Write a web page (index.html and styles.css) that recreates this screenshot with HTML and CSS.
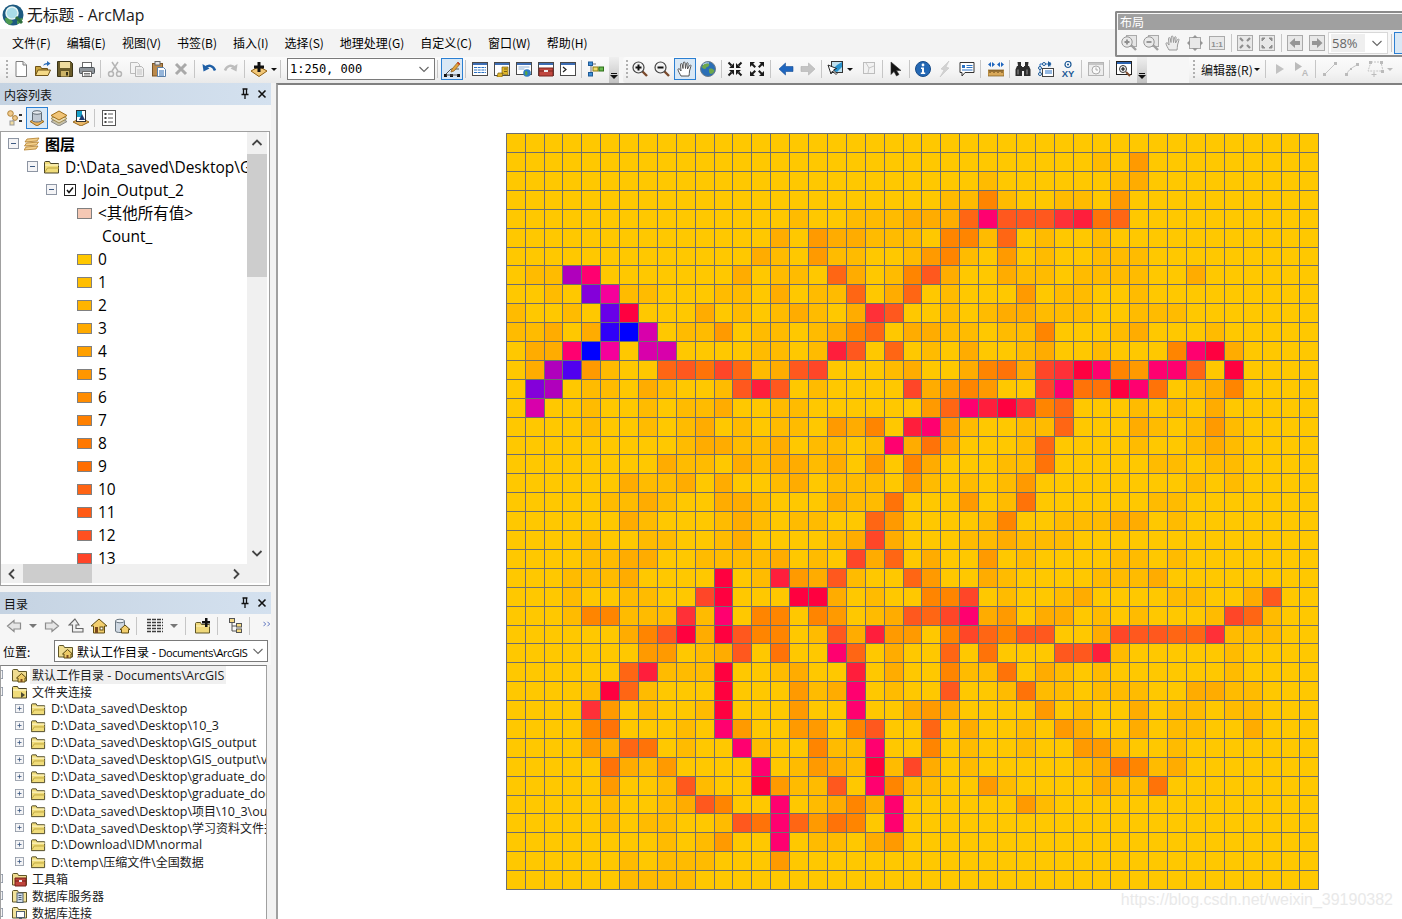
FILE: index.html
```html
<!DOCTYPE html>
<html lang="zh-CN">
<head>
<meta charset="utf-8">
<title>无标题 - ArcMap</title>
<link rel="stylesheet" href="styles.css">
</head>
<body>
<svg class="sprite" xmlns="http://www.w3.org/2000/svg">
<symbol id="new" viewBox="0 0 16 16"><path d="M3 .5h7l3.500 3.500v11.500H3z" fill="#fff" stroke="#7d7d7d"/><path d="M10 .5V4h3.500" fill="#e6e6e6" stroke="#7d7d7d"/></symbol>
<symbol id="open" viewBox="0 0 16 16"><path d="M.5 14.500V5.500h5l1 2h6v7z" fill="#c9a43f" stroke="#6e5318"/><path d="M.5 14.500l2.500-5.500h12.500l-2.500 5.500z" fill="#f4d987" stroke="#6e5318"/><path d="M8 5c.5-2 2-3 4-3V0l3.500 2.500L12 5.200V3.500C10.500 3.500 9 4 8 5z" fill="#2a6cb8"/></symbol>
<symbol id="save" viewBox="0 0 16 16"><path d="M.5 .5h13l2 2v13H.5z" fill="#6a5c2a" stroke="#3a3418"/><rect x="3" y="1" width="10" height="6" fill="#efdda0"/><rect x="4" y="10" width="8" height="5.500" fill="#cdb468"/><rect x="9" y="11" width="2" height="3.500" fill="#3a3418"/></symbol>
<symbol id="print" viewBox="0 0 16 16"><rect x="3.500" y="1.500" width="9" height="5" fill="#fff" stroke="#6a6a6a"/><rect x=".5" y="6.500" width="15" height="6" rx="1" fill="#8f959b" stroke="#4d5358"/><rect x="3.500" y="10.500" width="9" height="5" fill="#fff" stroke="#6a6a6a"/><path d="M5 12.500h6M5 14h6" stroke="#777"/></symbol>
<symbol id="cut" viewBox="0 0 16 16"><path d="M5 1l6 9M11 1l-6 9" stroke="#b5b5b5" stroke-width="1.500"/><circle cx="4" cy="13" r="2.500" fill="none" stroke="#b5b5b5" stroke-width="1.500"/><circle cx="12" cy="13" r="2.500" fill="none" stroke="#b5b5b5" stroke-width="1.500"/></symbol>
<symbol id="copy" viewBox="0 0 16 16"><path d="M1.500 1.500h7l2 2v9h-9z" fill="#f4f4f4" stroke="#bbb"/><path d="M6.500 5.500h6l2 2v8h-8z" fill="#f0f0f0" stroke="#b5b5b5"/><path d="M8 9h5M8 11h5M8 13h5" stroke="#c4c4c4"/></symbol>
<symbol id="paste" viewBox="0 0 16 16"><rect x="1.500" y="2.500" width="10" height="12.500" fill="#bb8a4c" stroke="#7a5527"/><rect x="4" y=".5" width="5" height="3.500" fill="#e8e8e8" stroke="#666"/><path d="M6.500 6.500h6l2 2v7h-8z" fill="#fff" stroke="#5a7fa8"/><path d="M8 10h5M8 12h5M8 14h5" stroke="#2c6db5"/></symbol>
<symbol id="del" viewBox="0 0 16 16"><path d="M3 3l10 10M13 3L3 13" stroke="#a9a9a9" stroke-width="3"/></symbol>
<symbol id="undo" viewBox="0 0 16 16"><path d="M4 7c3-3.500 8-3 10 2.500" fill="none" stroke="#1f5fa6" stroke-width="2.500"/><path d="M1.500 3l1 7.500 6-3z" fill="#1f5fa6"/></symbol>
<symbol id="redo" viewBox="0 0 16 16"><path d="M12 7C9 3.500 4 4 2 9.500" fill="none" stroke="#bdbdbd" stroke-width="2.500"/><path d="M14.500 3l-1 7.500-6-3z" fill="#bdbdbd"/></symbol>
<symbol id="add" viewBox="0 0 16 16"><path d="M8 5.500L16 10l-8 5.500L0 10z" fill="#f2c777" stroke="#8f5f12"/><path d="M6.500 1h3v3.500H13v3H9.500V11h-3V7.500H3v-3h3.500z" fill="#111"/></symbol>
<symbol id="edit" viewBox="0 0 18 18"><path d="M2 15l6-6h8" fill="none" stroke="#555" /><rect x="1" y="14" width="3" height="3" fill="#111"/><rect x="7" y="14" width="3" height="3" fill="#111"/><rect x="14" y="14" width="3" height="3" fill="#111"/><path d="M3 15h12" stroke="#555"/><path d="M9 9l6-7 2 2-6 7-3 1z" fill="#e2a33c" stroke="#8a5a14" stroke-width=".7"/><path d="M14.500 2.500l2 2" stroke="#d03a2a" stroke-width="1.500"/></symbol>
<symbol id="wtable" viewBox="0 0 16 16"><rect x=".5" y="1.500" width="15" height="13" fill="#fff" stroke="#4a4a4a"/><rect x="1" y="2" width="14" height="2" fill="#3d6db3"/><path d="M2 6.500h12M2 9h12M2 11.500h12" stroke="#2a72c4" stroke-dasharray="3 .7"/></symbol>
<symbol id="wcat" viewBox="0 0 16 16"><rect x=".5" y="1.500" width="15" height="13" fill="#fff" stroke="#4a4a4a"/><rect x="1" y="2" width="14" height="2" fill="#3d6db3"/><path d="M3 16l1-4h5l-1 4zM8 13V6h6v8z" fill="#e0b62a" stroke="#7c6210" stroke-width=".7"/><path d="M10 8h3M10 10.500h3" stroke="#7c6210"/></symbol>
<symbol id="wsearch" viewBox="0 0 16 16"><rect x=".5" y="1.500" width="15" height="12" fill="#fff" stroke="#4a4a4a"/><rect x="1" y="2" width="14" height="2" fill="#3d6db3"/><path d="M2.500 6h11M2.500 8h6" stroke="#8db0d6"/><circle cx="11" cy="12" r="3.800" fill="#2e7cc4"/><path d="M9 10.500c1.500-.5 2.500 0 2.500 1.500s-1 3-2 2.500z" fill="#5aa83e"/></symbol>
<symbol id="wtool" viewBox="0 0 16 16"><rect x=".5" y="1.500" width="15" height="13" fill="#fff" stroke="#4a4a4a"/><rect x="1" y="2" width="14" height="2" fill="#3d6db3"/><path d="M1 7h14v8H1z" fill="#c0473f" stroke="#7a2620"/><path d="M1 10h14" stroke="#7a2620"/><rect x="6" y="9" width="4" height="2" fill="#eee"/></symbol>
<symbol id="wpy" viewBox="0 0 16 16"><rect x=".5" y="1.500" width="15" height="13" fill="#fff" stroke="#4a4a4a"/><rect x="1" y="2" width="14" height="2" fill="#3d6db3"/><path d="M3 6l3 2.500L3 11" fill="none" stroke="#222" stroke-width="1.200"/></symbol>
<symbol id="model" viewBox="0 0 16 16"><path d="M3 3v10M3 3h5M3 13h2M6 8h5" stroke="#777" fill="none"/><rect x=".5" y="1" width="4" height="3.500" fill="#3f8fd8" stroke="#1e5a96"/><rect x=".5" y="11.500" width="4" height="3.500" fill="#3f8fd8" stroke="#1e5a96"/><rect x="5" y="6" width="5" height="4" fill="#f0dd6c" stroke="#8f7c14"/><rect x="11" y="6" width="4.500" height="4" fill="#69b850" stroke="#2f7018"/></symbol>
<symbol id="zin" viewBox="0 0 16 16"><path d="M10 10l5 5" stroke="#7b4a2c" stroke-width="2.400"/><circle cx="6.500" cy="6.500" r="5.500" fill="#f2f2f2" stroke="#444" stroke-width="1.200"/><path d="M3.500 6.500h6M6.500 3.500v6" stroke="#111" stroke-width="2"/></symbol>
<symbol id="zout" viewBox="0 0 16 16"><path d="M10 10l5 5" stroke="#7b4a2c" stroke-width="2.400"/><circle cx="6.500" cy="6.500" r="5.500" fill="#f2f2f2" stroke="#444" stroke-width="1.200"/><path d="M3.500 6.500h6" stroke="#111" stroke-width="2"/></symbol>
<symbol id="hand" viewBox="0 0 16 16"><path d="M4 15C3 13 1 10 1 8.500c0-1 1.300-1 2 0L4 10 3.500 3.500c0-1.200 1.500-1.200 1.700 0l.8 4L6.300 2c0-1.300 1.700-1.300 1.800 0l.4 5.500L9.500 2.500c.2-1.200 1.800-1 1.600.3L10.500 8l2-3.500c.6-1 1.900-.4 1.400.7L12.500 10c-.3 2 0 3-.5 5z" fill="#fff" stroke="#444" stroke-width=".9"/></symbol>
<symbol id="globe" viewBox="0 0 16 16"><circle cx="8" cy="8" r="7.500" fill="#2b6fb6" stroke="#6d7d8a"/><path d="M4 3c2-1 4-1 5 0s-1 3-2 3-1 2-2 2-3-1-3-2 1-2 2-3zM9 8c2-1 4 0 5 1s-1 4-3 4-2-3-2-5z" fill="#6fa84a"/><path d="M3 3.500C5 2 7 1.500 9 2" stroke="#cfe3f2" fill="none"/></symbol>
<symbol id="fzin" viewBox="0 0 16 16"><path d="M1.500 1.500l3 3M14.500 1.500l-3 3M1.500 14.500l3-3M14.500 14.500l-3-3" stroke="#1a1a1a" stroke-width="2"/><path d="M2 7h5V2zM14 7H9V2zM2 9h5v5zM14 9H9v5z" fill="#1a1a1a"/></symbol>
<symbol id="fzout" viewBox="0 0 16 16"><path d="M1 1h5L4.200 2.800 7 5.500 5.500 7 2.800 4.200 1 6zM15 1h-5l1.800 1.800L9 5.500 10.500 7l2.700-2.800L15 6zM1 15h5l-1.800-1.800L7 10.500 5.500 9l-2.700 2.800L1 10zM15 15h-5l1.800-1.800L9 10.500 10.500 9l2.700 2.800L15 10z" fill="#1a1a1a"/></symbol>
<symbol id="back" viewBox="0 0 16 16"><path d="M7.500 2L1 8l6.500 6v-3.500H15v-5H7.500z" fill="#1f66bf" stroke="#174f95" stroke-width=".6"/></symbol>
<symbol id="fwd" viewBox="0 0 16 16"><path d="M8.500 2L15 8l-6.500 6v-3.500H1v-5h7.500z" fill="#c4c4c4" stroke="#b0b0b0" stroke-width=".6"/></symbol>
<symbol id="sel" viewBox="0 0 16 16"><rect x="4.500" y=".5" width="11" height="11" fill="#bfe0ee" stroke="#333"/><path d="M5 9l5-5 5-3v5l-5 5z" fill="#2a92cc"/><path d="M1 4l3 9 1.500-3 3.500 3.500 1-1L6.500 9l3-1.500z" fill="#fff" stroke="#111" stroke-width=".9"/></symbol>
<symbol id="clear" viewBox="0 0 16 16"><rect x="2.500" y="1.500" width="11" height="11" fill="#f2f2f2" stroke="#bdbdbd"/><path d="M5 2l3 5-1 5M8 7l5-2" stroke="#c6c6c6" fill="none"/></symbol>
<symbol id="arrow" viewBox="0 0 16 16"><path d="M3 1v12.500l3-3 2.500 4.500 2.500-1.500L8.500 9.500 13 9.500z" fill="#151515" stroke="#333" stroke-width=".6"/></symbol>
<symbol id="info" viewBox="0 0 16 16"><circle cx="8" cy="8" r="7.500" fill="#2468b4" stroke="#174b88"/><circle cx="8" cy="4" r="1.400" fill="#fff"/><path d="M6 6.500h3v5h1.200V13H5.800v-1.500H7V8H6z" fill="#fff"/></symbol>
<symbol id="bolt" viewBox="0 0 16 16"><path d="M12 0L4 8l3 1-4 7 9-9-3-1z" fill="#d2d2d2" stroke="#c0c0c0" stroke-width=".5"/></symbol>
<symbol id="popup" viewBox="0 0 16 16"><path d="M1 1.500h14v10H6l-3 3.500v-3.500H1z" fill="#fff" stroke="#333"/><rect x="3" y="4" width="3" height="3" fill="#2a72c4"/><path d="M7.500 4.500h6M7.500 6.500h6M3 9h10.500" stroke="#2a72c4"/></symbol>
<symbol id="measure" viewBox="0 0 16 16"><path d="M0 3.500L3 1v5zM7 3.500L4 1v5zM16 3.500L13 1v5zM9 3.500L12 1v5z" fill="#1f66bf"/><rect y="9" width="16" height="6" fill="#d9a95a" stroke="#7d5a1e" stroke-width=".7"/><path d="M2 9v3M4 9v2M6 9v3M8 9v2M10 9v3M12 9v2M14 9v3" stroke="#5c3f12"/></symbol>
<symbol id="find" viewBox="0 0 16 16"><path d="M2.500 1h3.500v4H3zM10 1h3.500l-.5 4h-3zM2 5h5v10H.5V8.500zM9 5h5l1.500 3.500V15H9zM7 6h2v4H7z" fill="#2d2d2d"/><path d="M3 8.500v5M12 8.500v5" stroke="#9a9a9a"/></symbol>
<symbol id="route" viewBox="0 0 16 16"><rect x="4.500" y="7.500" width="11" height="8" fill="#fff" stroke="#444"/><path d="M7 10h7M7 12h7" stroke="#2a72c4"/><path d="M2 12V3h8M12 5.500V1" stroke="#2a72c4" fill="none"/><circle cx="2" cy="7" r="1.500" fill="#fff" stroke="#1e5a96"/><circle cx="2" cy="13" r="1.500" fill="#fff" stroke="#1e5a96"/><circle cx="6" cy="3" r="1.500" fill="#fff" stroke="#1e5a96"/><path d="M10 0v6l3.500-3z" fill="#1e5a96"/></symbol>
<symbol id="xy" viewBox="0 0 16 16"><circle cx="8" cy="3.500" r="3" fill="#fff" stroke="#1e5a96" stroke-width="1.200"/><circle cx="8" cy="3.500" r="1.100" fill="#1e5a96"/><text x="8" y="15.500" text-anchor="middle" class="svgxy">XY</text></symbol>
<symbol id="time" viewBox="0 0 16 16"><rect x=".5" y="1.500" width="15" height="13" fill="#ededed" stroke="#b5b5b5"/><rect x="1" y="2" width="14" height="2" fill="#c6c6c6"/><circle cx="8" cy="9" r="4" fill="#fafafa" stroke="#aaa"/><path d="M8 6.500V9h2" stroke="#aaa" fill="none"/></symbol>
<symbol id="viewer" viewBox="0 0 16 16"><rect x=".5" y=".5" width="15" height="13" fill="#fff" stroke="#222"/><rect x="1" y="1" width="14" height="2" fill="#2c63b0"/><path d="M10 11l4 4" stroke="#7b4a2c" stroke-width="2"/><circle cx="7" cy="8" r="3.500" fill="#f2f2f2" stroke="#333"/><path d="M5 8h4M7 6v4" stroke="#111" stroke-width="1.200"/></symbol>
<symbol id="e1" viewBox="0 0 16 16"><path d="M4 3v10l8-5z" fill="#c2c2c2"/></symbol>
<symbol id="e2" viewBox="0 0 16 16"><path d="M1 1v9l7-4.500z" fill="#bbb"/><text x="11" y="15" text-anchor="middle" class="svga">A</text></symbol>
<symbol id="e3" viewBox="0 0 16 16"><path d="M3 13L13 3" stroke="#c4c4c4"/><rect x="1" y="12" width="3" height="3" fill="#bbb"/><rect x="12" y="1" width="3" height="3" fill="#bbb"/></symbol>
<symbol id="e4" viewBox="0 0 16 16"><path d="M3 13C4 9 9 6 13 4" stroke="#c4c4c4" fill="none"/><rect x="1" y="12" width="3" height="3" fill="#bbb"/><rect x="12" y="2" width="3" height="3" fill="#bbb"/><rect x="6" y="7" width="2" height="2" fill="#bbb"/></symbol>
<symbol id="e5" viewBox="0 0 18 18"><path d="M5 2h10l2 9-8 0-7 0z" fill="none" stroke="#c4c4c4" stroke-dasharray="2 1"/><rect x="3" y="1" width="3" height="3" fill="#bbb"/><rect x="14" y="1" width="3" height="3" fill="#bbb"/><rect x="15" y="10" width="3" height="3" fill="#bbb"/><path d="M8 12v5M5.500 14.500h5" stroke="#bbb"/></symbol>
<symbol id="tdo" viewBox="0 0 16 16"><path d="M3 4l5 4-4 5M8 8h3" stroke="#888" fill="none"/><circle cx="3.500" cy="3.500" r="2.800" fill="#f0c98a" stroke="#b0843c"/><circle cx="8" cy="8" r="2.400" fill="#f0c98a" stroke="#b0843c"/><rect x="3" y="11" width="4" height="4" fill="#f0dca0" stroke="#999"/><rect x="12" y="4" width="3" height="2" fill="#333"/><rect x="12" y="10" width="3" height="2" fill="#333"/></symbol>
<symbol id="tsrc" viewBox="0 0 16 16"><path d="M8 8l7 3.500L8 16l-7-4.500z" fill="#e8b25c" stroke="#96681c"/><path d="M3.500 2.500v8c0 2 9 2 9 0v-8z" fill="#bfc8d2" stroke="#5e6a74"/><ellipse cx="8" cy="2.500" rx="4.500" ry="1.800" fill="#e6eaef" stroke="#5e6a74"/></symbol>
<symbol id="tvis" viewBox="0 0 16 16"><path d="M8 7l8 4.500L8 16l-8-4.500z" fill="#c6c0a8" stroke="#888"/><path d="M8 4l8 4.500L8 13 0 8.500z" fill="#e7dcb8" stroke="#a08a50"/><path d="M8 1l8 4.500L8 10 0 5.500z" fill="#f0c477" stroke="#a06e18"/></symbol>
<symbol id="tsel" viewBox="0 0 16 16"><path d="M8 8l8 4L8 16l-8-4z" fill="#eab869" stroke="#96681c"/><rect x="3.500" y=".5" width="9" height="11" fill="#fff" stroke="#333"/><path d="M4 1h5v6H4z" fill="#18a0c8"/><path d="M9 4l3 6H6z" fill="#1d3b70"/></symbol>
<symbol id="topt" viewBox="0 0 16 16"><rect x="1.500" y=".5" width="13" height="15" fill="#fff" stroke="#555"/><path d="M7 4h5M7 8h5M7 12h5" stroke="#555"/><rect x="3.500" y="3" width="2" height="2" fill="#444"/><rect x="3.500" y="7" width="2" height="2" fill="#444"/><rect x="3.500" y="11" width="2" height="2" fill="#444"/></symbol>
<symbol id="minus" viewBox="0 0 11 11"><rect x=".5" y=".5" width="10" height="10" fill="#f4f4f6" stroke="#8d95a3"/><path d="M3 5.500h5" stroke="#3d5a82"/></symbol>
<symbol id="plus" viewBox="0 0 11 11"><rect x=".5" y=".5" width="10" height="10" fill="#f4f4f6" stroke="#8d95a3"/><path d="M3 5.500h5M5.500 3v5" stroke="#3d5a82"/></symbol>
<symbol id="lyr" viewBox="0 0 16 16"><path d="M3 3l12-1-2 3-12 1zM2.500 7l12-1-2 3-12 1zM2 11l12-1-2 3-12 1z" fill="#f3cf8a" stroke="#b07c2a" stroke-width=".8"/></symbol>
<symbol id="folder" viewBox="0 0 16 16"><path d="M.5 14V3.500c0-.5.500-1 1-1h4l1 2h8v9.500z" fill="#f0dc7a" stroke="#4a4428"/><path d="M1 6h14" stroke="#fff9d4"/><path d="M1 13l2.500-4H15" stroke="#bda53e" fill="none"/></symbol>
<symbol id="fconn" viewBox="0 0 16 16"><path d="M.5 14V3.500c0-.5.500-1 1-1h4l1 2h8v9.500z" fill="#f0dc7a" stroke="#4a4428"/><path d="M1 6h14" stroke="#fff9d4"/><path d="M9 8l4 3-4 3z" fill="#4d4a30"/></symbol>
<symbol id="fhome" viewBox="0 0 16 16"><path d="M.5 14V3.500c0-.5.500-1 1-1h4l1 2h8v9.500z" fill="#efdc90" stroke="#5f5628"/><path d="M9.500 6.500l-5 4.500h1.500v4h7v-4h1.500z" fill="#eecb66" stroke="#5c4a12"/><rect x="8.500" y="12" width="2" height="3" fill="#7a4a1c"/></symbol>
<symbol id="fdb" viewBox="0 0 16 16"><path d="M.5 14V3.500c0-.5.500-1 1-1h4l1 2h8v9.500z" fill="#f2e39c" stroke="#5f5628"/><rect x="5" y="5" width="6" height="9.500" fill="#cfdbe8" stroke="#50606e"/><path d="M6.500 7.500h3M6.500 9.500h3M6.500 11.500h3" stroke="#50606e"/></symbol>
<symbol id="fdbc" viewBox="0 0 16 16"><path d="M.5 13V3.500c0-.5.500-1 1-1h4l1 2h8V13z" fill="#f2e39c" stroke="#5f5628"/><rect x="4.500" y="6.500" width="8" height="6" fill="#fff" stroke="#50606e"/><rect x="7" y="13" width="3" height="2.500" fill="#50606e"/></symbol>
<symbol id="ftool" viewBox="0 0 16 16"><path d="M.5 14V3.500c0-.5.500-1 1-1h4l1 2h8v9.500z" fill="#efdc90" stroke="#5f5628"/><path d="M3 7h11v8H3z" fill="#c0443c" stroke="#742118"/><path d="M3 10h11" stroke="#742118"/><rect x="7" y="9" width="3" height="2" fill="#eee"/></symbol>
<symbol id="cback" viewBox="0 0 16 16"><path d="M8 2.500L1.500 8 8 13.500V11h6.500V5H8z" fill="#e6e6e6" stroke="#8c8c8c" stroke-width="1.200"/></symbol>
<symbol id="cfwd" viewBox="0 0 16 16"><path d="M8 2.500L14.500 8 8 13.500V11H1.500V5H8z" fill="#e6e6e6" stroke="#8c8c8c" stroke-width="1.200"/></symbol>
<symbol id="cup" viewBox="0 0 16 16"><path d="M7 1L1 7h3.500v7H15v-3.500H8V7h3z" fill="#f0f0f0" stroke="#666" stroke-width="1.100"/></symbol>
<symbol id="chome" viewBox="0 0 16 16"><path d="M8 1L0 8h2.500v7h11V8H16z" fill="#f3cf6e" stroke="#5e4a12"/><rect x="4" y="9" width="3" height="6" fill="#7a4a1c"/><rect x="9" y="9" width="3" height="3" fill="#fff" stroke="#5e4a12"/></symbol>
<symbol id="cdb" viewBox="0 0 16 16"><path d="M1.500 3v10c0 2 9 2 9 0V3z" fill="#cfd8e2" stroke="#6a7680"/><ellipse cx="6" cy="3" rx="4.500" ry="1.800" fill="#eef2f6" stroke="#6a7680"/><path d="M11 7l-5 4.500h1.500V15h7v-3.500H16z" fill="#f3cf6e" stroke="#5e4a12"/></symbol>
<symbol id="cgrid" viewBox="0 0 18 16"><path d="M1 1.500h16M1 4.500h16M1 7.500h16M1 10.500h16M1 13.500h16" stroke="#3e3e3e" stroke-width="1.500" stroke-dasharray="4 1"/></symbol>
<symbol id="cnew" viewBox="0 0 16 16"><path d="M.5 15V5.500c0-.5.500-1 1-1h4l1 2h8V15z" fill="#efd87a" stroke="#5f5628"/><path d="M1 8h14" stroke="#fff6c2"/><path d="M10 0h2.500v3H15v2.500h-2.500V9H10V5.500H7V3h3z" fill="#111"/></symbol>
<symbol id="ctree" viewBox="0 0 16 16"><rect x="1.500" y=".5" width="5" height="4" fill="#f3d985" stroke="#555"/><path d="M4 5v8h4M4 8h4" stroke="#555" fill="none"/><rect x="8.500" y="5.500" width="5" height="3.500" fill="#f3d985" stroke="#555"/><rect x="8.500" y="11" width="5" height="3.500" fill="#f3d985" stroke="#555"/></symbol>
<symbol id="more" viewBox="0 0 9 6"><path d="M.5 .5L3 3 .5 5.500M5 .5L7.500 3 5 5.500" fill="none" stroke="#4a63b8"/></symbol>
<symbol id="g1" viewBox="0 0 16 16"><rect x="5.500" y=".5" width="10" height="11" fill="#e6e6e6" stroke="#aaa"/><path d="M10 10l5 5" stroke="#a0a0a0" stroke-width="2.400"/><circle cx="6" cy="7" r="5.200" fill="#eaeaea" stroke="#969696"/><path d="M3.500 7h5M6 4.500v5" stroke="#8e8e8e" stroke-width="1.800"/></symbol>
<symbol id="g2" viewBox="0 0 16 16"><rect x="5.500" y=".5" width="10" height="11" fill="#e6e6e6" stroke="#aaa"/><path d="M10 10l5 5" stroke="#a0a0a0" stroke-width="2.400"/><circle cx="6" cy="7" r="5.200" fill="#eaeaea" stroke="#969696"/><path d="M3.500 7h5" stroke="#8e8e8e" stroke-width="1.800"/></symbol>
<symbol id="g3" viewBox="0 0 16 16"><path d="M4 15C3 13 1 10 1 8.500c0-1 1.300-1 2 0L4 10 3.500 3.500c0-1.200 1.500-1.200 1.700 0l.8 4L6.300 2c0-1.300 1.700-1.300 1.800 0l.4 5.500L9.500 2.500c.2-1.200 1.800-1 1.600.3L10.500 8l2-3.500c.6-1 1.900-.4 1.400.7L12.500 10c-.3 2 0 3-.5 5z" fill="#ececec" stroke="#999" stroke-width="1"/></symbol>
<symbol id="g4" viewBox="0 0 16 16"><rect x="2.500" y="2.500" width="11" height="11" fill="#e8e8e8" stroke="#aaa"/><path d="M8 0l3 3H5zM8 16l3-3H5zM0 8l3-3v6zM16 8l-3-3v6z" fill="#969696"/></symbol>
<symbol id="g5" viewBox="0 0 16 16"><rect x=".5" y="1.500" width="15" height="13" fill="#e8e8e8" stroke="#aaa"/><text x="8" y="12" text-anchor="middle" class="svg11">1:1</text></symbol>
<symbol id="g6" viewBox="0 0 16 16"><rect x=".5" y=".5" width="15" height="15" fill="#e8e8e8" stroke="#aaa"/><path d="M3 3l3 3M13 3l-3 3M3 13l3-3M13 13l-3-3" stroke="#8e8e8e" stroke-width="2.200"/></symbol>
<symbol id="g7" viewBox="0 0 16 16"><rect x=".5" y=".5" width="15" height="15" fill="#e8e8e8" stroke="#aaa"/><path d="M3 3h3L3 6zM13 3h-3l3 3zM3 13h3l-3-3zM13 13h-3l3-3z" fill="#8e8e8e" stroke="#8e8e8e"/></symbol>
<symbol id="g8" viewBox="0 0 16 16"><rect x=".5" y=".5" width="15" height="15" fill="#e8e8e8" stroke="#aaa"/><path d="M8 3L2.500 8 8 13v-3h5V6H8z" fill="#969696"/></symbol>
<symbol id="g9" viewBox="0 0 16 16"><rect x=".5" y=".5" width="15" height="15" fill="#e8e8e8" stroke="#aaa"/><path d="M8 3l5.500 5L8 13v-3H3V6h5z" fill="#969696"/></symbol>
<symbol id="chevd" viewBox="0 0 12 12"><path d="M1.500 4L6 8.500 10.500 4" fill="none" stroke="#666" stroke-width="1.100"/></symbol>
<symbol id="chevd2" viewBox="0 0 12 12"><path d="M1.500 4L6 8.500 10.500 4" fill="none" stroke="#444" stroke-width="1.800"/></symbol>
<symbol id="chevu2" viewBox="0 0 12 12"><path d="M1.500 8L6 3.500 10.500 8" fill="none" stroke="#444" stroke-width="1.800"/></symbol>
<symbol id="chevl2" viewBox="0 0 12 12"><path d="M8 1.500L3.500 6 8 10.500" fill="none" stroke="#444" stroke-width="1.800"/></symbol>
<symbol id="chevr2" viewBox="0 0 12 12"><path d="M4 1.500L8.500 6 4 10.500" fill="none" stroke="#444" stroke-width="1.800"/></symbol>
<symbol id="pin" viewBox="0 0 10 12"><path d="M2.500 1h5M3.500 1v5M6.500 1v5M1.500 6.500h7M5 6.500V11" stroke="#111" fill="none" stroke-width="1.300"/></symbol>
<symbol id="close" viewBox="0 0 10 10"><path d="M1.500 1.500l7 7M8.500 1.500l-7 7" stroke="#111" stroke-width="1.600"/></symbol>
<symbol id="check" viewBox="0 0 12 12"><rect x=".5" y=".5" width="11" height="11" fill="#fff" stroke="#222"/><path d="M3 6l2 2.500L9 3.500" fill="none" stroke="#111" stroke-width="1.500"/></symbol>
</svg>

<div class="app">
  <header class="titlebar">
    <svg class="logo" viewBox="0 0 22 22"><circle cx="11" cy="11" r="10.500" fill="#1d5a80"/><path d="M3 14c3-1 6 1 8 4l-3 3c-3-1-5-3-5-7zM15 17c2-2 4-3 6-3-1 3-3 6-6 6z" fill="#4f9a52"/><circle cx="10" cy="9" r="6" fill="#a9dce8" stroke="#e8f6f4" stroke-width="1.500"/><path d="M14 13l6 6" stroke="#2f6e3e" stroke-width="3"/></svg>
    <span class="apptitle">无标题 - ArcMap</span>
  </header>
  <nav class="menubar">
    <span>文件(F)</span><span>编辑(E)</span><span>视图(V)</span><span>书签(B)</span><span>插入(I)</span><span>选择(S)</span><span>地理处理(G)</span><span>自定义(C)</span><span>窗口(W)</span><span>帮助(H)</span>
  </nav>
  <div class="toolstrip">
    <div class="tb tb1">
      <i class="grip"></i>
      <b class="btn"><svg class="ic"><use href="#new"/></svg></b>
      <b class="btn"><svg class="ic"><use href="#open"/></svg></b>
      <b class="btn"><svg class="ic"><use href="#save"/></svg></b>
      <b class="btn"><svg class="ic"><use href="#print"/></svg></b>
      <i class="sep"></i>
      <b class="btn"><svg class="ic"><use href="#cut"/></svg></b>
      <b class="btn"><svg class="ic"><use href="#copy"/></svg></b>
      <b class="btn"><svg class="ic"><use href="#paste"/></svg></b>
      <b class="btn"><svg class="ic"><use href="#del"/></svg></b>
      <i class="sep"></i>
      <b class="btn"><svg class="ic"><use href="#undo"/></svg></b>
      <b class="btn"><svg class="ic"><use href="#redo"/></svg></b>
      <i class="sep"></i>
      <b class="btn"><svg class="ic"><use href="#add"/></svg></b>
      <i class="dd"></i>
      <i class="sep"></i>
      <div class="scale"><span>1:250, 000</span><svg class="chev"><use href="#chevd"/></svg></div>
      <i class="sep"></i>
      <b class="btn on"><svg class="ic18"><use href="#edit"/></svg></b>
      <i class="sep"></i>
      <b class="btn"><svg class="ic"><use href="#wtable"/></svg></b>
      <b class="btn"><svg class="ic"><use href="#wcat"/></svg></b>
      <b class="btn"><svg class="ic"><use href="#wsearch"/></svg></b>
      <b class="btn"><svg class="ic"><use href="#wtool"/></svg></b>
      <b class="btn"><svg class="ic"><use href="#wpy"/></svg></b>
      <i class="sep"></i>
      <b class="btn"><svg class="ic"><use href="#model"/></svg></b>
      <i class="over m2"></i>
    </div>
    <div class="tb tb2">
      <i class="grip"></i>
      <b class="btn"><svg class="ic"><use href="#zin"/></svg></b>
      <b class="btn"><svg class="ic"><use href="#zout"/></svg></b>
      <b class="btn on m1"><svg class="ic"><use href="#hand"/></svg></b>
      <b class="btn m1"><svg class="ic"><use href="#globe"/></svg></b>
      <i class="sep"></i>
      <b class="btn"><svg class="ic"><use href="#fzin"/></svg></b>
      <b class="btn"><svg class="ic"><use href="#fzout"/></svg></b>
      <i class="sep"></i>
      <b class="btn m2"><svg class="ic"><use href="#back"/></svg></b>
      <b class="btn"><svg class="ic"><use href="#fwd"/></svg></b>
      <i class="sep"></i>
      <b class="btn"><svg class="ic"><use href="#sel"/></svg></b>
      <i class="dd"></i>
      <b class="btn m4"><svg class="ic"><use href="#clear"/></svg></b>
      <i class="sep"></i>
      <b class="btn"><svg class="ic"><use href="#arrow"/></svg></b>
      <i class="sep"></i>
      <b class="btn"><svg class="ic"><use href="#info"/></svg></b>
      <b class="btn"><svg class="ic"><use href="#bolt"/></svg></b>
      <b class="btn"><svg class="ic"><use href="#popup"/></svg></b>
      <i class="sep"></i>
      <b class="btn m2"><svg class="ic"><use href="#measure"/></svg></b>
      <i class="sep"></i>
      <b class="btn"><svg class="ic"><use href="#find"/></svg></b>
      <b class="btn m1"><svg class="ic"><use href="#route"/></svg></b>
      <b class="btn"><svg class="ic"><use href="#xy"/></svg></b>
      <i class="sep"></i>
      <b class="btn m1"><svg class="ic"><use href="#time"/></svg></b>
      <i class="sep"></i>
      <b class="btn m1"><svg class="ic"><use href="#viewer"/></svg></b>
      <i class="over m2"></i>
    </div>
    <div class="tb tb3">
      <i class="grip"></i>
      <span class="edlabel">编辑器(R)</span>
      <i class="dd"></i>
      <i class="sep m2"></i>
      <b class="btn m1"><svg class="ic"><use href="#e1"/></svg></b>
      <b class="btn"><svg class="ic"><use href="#e2"/></svg></b>
      <i class="sep"></i>
      <b class="btn m1"><svg class="ic"><use href="#e3"/></svg></b>
      <b class="btn"><svg class="ic"><use href="#e4"/></svg></b>
      <b class="btn m1"><svg class="ic18"><use href="#e5"/></svg></b>
      <i class="dd dim"></i>
    </div>
  </div>

  <main class="workspace">
    <aside class="sidebar">
      <div class="dockhead"><span>内容列表</span><svg class="pin"><use href="#pin"/></svg><svg class="close"><use href="#close"/></svg></div>
      <div class="dockbar tocbar">
        <b class="btn"><svg class="ic"><use href="#tdo"/></svg></b>
        <b class="btn on"><svg class="ic"><use href="#tsrc"/></svg></b>
        <b class="btn"><svg class="ic"><use href="#tvis"/></svg></b>
        <b class="btn"><svg class="ic"><use href="#tsel"/></svg></b>
        <i class="sep"></i>
        <b class="btn"><svg class="ic"><use href="#topt"/></svg></b>
      </div>
      <section class="toc">
        <div class="tocmain">
          <div class="toctree">
            <div class="row r0"><svg class="box"><use href="#minus"/></svg><svg class="ic ml5"><use href="#lyr"/></svg><span class="strong ml5">图层</span></div>
            <div class="row r1"><svg class="box"><use href="#minus"/></svg><svg class="ic ml6"><use href="#folder"/></svg><span class="ml5">D:\Data_saved\Desktop\GIS_output</span></div>
            <div class="row r2"><svg class="box"><use href="#minus"/></svg><svg class="chk"><use href="#check"/></svg><span class="ml7">Join_Output_2</span></div>
            <div class="row r3"><i class="sw other"></i><span>&lt;其他所有值&gt;</span></div>
            <div class="row r4">Count_</div>
            <div class="row r3"><i class="sw s0"></i><span>0</span></div>
            <div class="row r3"><i class="sw s1"></i><span>1</span></div>
            <div class="row r3"><i class="sw s2"></i><span>2</span></div>
            <div class="row r3"><i class="sw s3"></i><span>3</span></div>
            <div class="row r3"><i class="sw s4"></i><span>4</span></div>
            <div class="row r3"><i class="sw s5"></i><span>5</span></div>
            <div class="row r3"><i class="sw s6"></i><span>6</span></div>
            <div class="row r3"><i class="sw s7"></i><span>7</span></div>
            <div class="row r3"><i class="sw s8"></i><span>8</span></div>
            <div class="row r3"><i class="sw s9"></i><span>9</span></div>
            <div class="row r3"><i class="sw s10"></i><span>10</span></div>
            <div class="row r3"><i class="sw s11"></i><span>11</span></div>
            <div class="row r3"><i class="sw s12"></i><span>12</span></div>
            <div class="row r3"><i class="sw s13"></i><span>13</span></div>
          </div>
          <div class="vscroll">
            <div class="sbtn"><svg class="chv"><use href="#chevu2"/></svg></div>
            <div class="vthumb"></div>
            <div class="sfill"></div>
            <div class="sbtn"><svg class="chv"><use href="#chevd2"/></svg></div>
          </div>
        </div>
        <div class="hscroll">
          <div class="hbtn"><svg class="chv"><use href="#chevl2"/></svg></div>
          <div class="hthumb"></div>
          <div class="sfill"></div>
          <div class="hbtn hbtnr"><svg class="chv"><use href="#chevr2"/></svg></div>
        </div>
      </section>
      <div class="dockgap"></div>
      <div class="dockhead"><span>目录</span><svg class="pin"><use href="#pin"/></svg><svg class="close"><use href="#close"/></svg></div>
      <div class="dockbar catbar">
        <b class="btn"><svg class="ic"><use href="#cback"/></svg></b>
        <i class="dd gray m4"></i>
        <b class="btn m4"><svg class="ic"><use href="#cfwd"/></svg></b>
        <b class="btn m2"><svg class="ic"><use href="#cup"/></svg></b>
        <b class="btn m1"><svg class="ic"><use href="#chome"/></svg></b>
        <b class="btn m1"><svg class="ic"><use href="#cdb"/></svg></b>
        <i class="sep m1"></i>
        <b class="btn m4"><svg class="ic18"><use href="#cgrid"/></svg></b>
        <i class="dd gray m4"></i>
        <i class="sep m5"></i>
        <b class="btn m3"><svg class="ic"><use href="#cnew"/></svg></b>
        <i class="sep m1"></i>
        <b class="btn m4"><svg class="ic"><use href="#ctree"/></svg></b>
        <i class="sep"></i>
        <svg class="moreglyph"><use href="#more"/></svg>
      </div>
      <div class="locrow">
        <label class="loclabel">位置:</label>
        <div class="loccombo">
          <svg class="ic"><use href="#fhome"/></svg>
          <span class="loctext">默认工作目录 - <small>Documents\ArcGIS</small></span>
          <svg class="chev"><use href="#chevd"/></svg>
        </div>
      </div>
      <section class="catalog">
        <div class="crow ctop"><svg class="cbox"><use href="#plus"/></svg><svg class="ic cfold"><use href="#fhome"/></svg><span class="hl"><span class="zh">默认工作目录</span> - Documents\ArcGIS</span></div>
        <div class="crow ctop"><svg class="cbox"><use href="#plus"/></svg><svg class="ic cfold"><use href="#fconn"/></svg><span class="nohl">文件夹连接</span></div>
        <div class="crow csub"><svg class="sbox"><use href="#plus"/></svg><svg class="ic sfold"><use href="#folder"/></svg><span>D:\Data_saved\Desktop</span></div>
        <div class="crow csub"><svg class="sbox"><use href="#plus"/></svg><svg class="ic sfold"><use href="#folder"/></svg><span>D:\Data_saved\Desktop\10_3</span></div>
        <div class="crow csub"><svg class="sbox"><use href="#plus"/></svg><svg class="ic sfold"><use href="#folder"/></svg><span>D:\Data_saved\Desktop\GIS_output</span></div>
        <div class="crow csub"><svg class="sbox"><use href="#plus"/></svg><svg class="ic sfold"><use href="#folder"/></svg><span>D:\Data_saved\Desktop\GIS_output\vector</span></div>
        <div class="crow csub"><svg class="sbox"><use href="#plus"/></svg><svg class="ic sfold"><use href="#folder"/></svg><span>D:\Data_saved\Desktop\graduate_doc</span></div>
        <div class="crow csub"><svg class="sbox"><use href="#plus"/></svg><svg class="ic sfold"><use href="#folder"/></svg><span>D:\Data_saved\Desktop\graduate_doc2</span></div>
        <div class="crow csub"><svg class="sbox"><use href="#plus"/></svg><svg class="ic sfold"><use href="#folder"/></svg><span>D:\Data_saved\Desktop\<span class="zh">项目</span>\10_3\output</span></div>
        <div class="crow csub"><svg class="sbox"><use href="#plus"/></svg><svg class="ic sfold"><use href="#folder"/></svg><span>D:\Data_saved\Desktop\<span class="zh">学习资料文件夹</span></span></div>
        <div class="crow csub"><svg class="sbox"><use href="#plus"/></svg><svg class="ic sfold"><use href="#folder"/></svg><span>D:\Download\IDM\normal</span></div>
        <div class="crow csub"><svg class="sbox"><use href="#plus"/></svg><svg class="ic sfold"><use href="#folder"/></svg><span>D:\temp\<span class="zh">压缩文件</span>\<span class="zh">全国数据</span></span></div>
        <div class="crow ctop"><svg class="cbox"><use href="#plus"/></svg><svg class="ic cfold"><use href="#ftool"/></svg><span class="nohl">工具箱</span></div>
        <div class="crow ctop"><svg class="cbox"><use href="#plus"/></svg><svg class="ic cfold"><use href="#fdb"/></svg><span class="nohl">数据库服务器</span></div>
        <div class="crow ctop"><svg class="cbox"><use href="#plus"/></svg><svg class="ic cfold"><use href="#fdbc"/></svg><span class="nohl">数据库连接</span></div>
      </section>
    </aside>
    <div class="mapview">
      <div class="grid" id="grid"></div>
    </div>
  </main>

  <div class="floatbar">
    <div class="floattitle">布局</div>
    <div class="floattools">
      <b class="btn"><svg class="ic"><use href="#g1"/></svg></b>
      <b class="btn"><svg class="ic"><use href="#g2"/></svg></b>
      <b class="btn"><svg class="ic"><use href="#g3"/></svg></b>
      <b class="btn"><svg class="ic"><use href="#g4"/></svg></b>
      <b class="btn"><svg class="ic"><use href="#g5"/></svg></b>
      <i class="sep"></i>
      <b class="btn"><svg class="ic"><use href="#g6"/></svg></b>
      <b class="btn"><svg class="ic"><use href="#g7"/></svg></b>
      <i class="sep"></i>
      <b class="btn"><svg class="ic"><use href="#g8"/></svg></b>
      <b class="btn"><svg class="ic"><use href="#g9"/></svg></b>
      <div class="pct"><span>58%</span><svg class="chev"><use href="#chevd"/></svg></div>
      <i class="sep"></i>
      <b class="btn on faded"></b>
    </div>
  </div>
  <div class="watermark">https://blog.csdn.net/weixin_39190382</div>
</div>
<script src="script.js"></script>
</body>
</html>
```
FILE: styles.css
```css
* { box-sizing: border-box; }
html, body { margin: 0; height: 100%; overflow: hidden; background: #fff; }
body { font-family: "Open Sans", "Noto Sans CJK SC", sans-serif; color: #000; }
.sprite { display: none; }
.app { position: relative; width: 1402px; height: 919px; overflow: hidden; display: flex; flex-direction: column; }

.titlebar { height: 29px; display: flex; align-items: center; padding-left: 2px; background: #fff; }
.logo { width: 22px; height: 22px; }
.apptitle { margin-left: 3px; font-size: 15.8px; color: #1a1a1a; }

.menubar { height: 28px; display: flex; align-items: center; gap: 16px; padding: 0 0 2px 12px; background: #f3f3f3; font-size: 12px; font-family: "Noto Sans CJK SC", sans-serif; }

.toolstrip { height: 26px; display: flex; background: #f6f6f6; }
.tb { display: flex; align-items: center; height: 26px; padding-bottom: 2px; background: linear-gradient(#fbfbfb, #f4f4f4 60%, #e9e9e9); }
.tb1 { width: 619px; padding-left: 6px; border-radius: 0 3px 3px 0; }
.tb2 { width: 524px; margin-left: 4px; padding-left: 3px; border-radius: 3px; }
.tb2 .sep { margin: 0 2px; }
.tb3 { margin-left: 42px; flex: 1; padding-left: 4px; }
.tb3 .sep { margin: 0 2px; }
.btn { flex: none; width: 22px; height: 22px; display: flex; align-items: center; justify-content: center; }
.btn.on { border: 1px solid #2b7fd2; background: #d9e8f5; }
.ic { width: 16px; height: 16px; flex: none; display: block; }
.ic18 { width: 18px; height: 18px; flex: none; display: block; }
.grip { width: 2px; height: 18px; margin-right: 2px; flex: none; background: repeating-linear-gradient(#b0b0b0 0 2px, transparent 2px 4px); }
.tb2 .grip { margin-right: 1px; }
.sep { flex: none; width: 1px; height: 18px; background: #c6c6c6; margin: 0 3px 0 2px; }
.dd { flex: none; width: 8px; display: flex; justify-content: center; }
.dd::before { content: ""; border-left: 3px solid transparent; border-right: 3px solid transparent; border-top: 3px solid #111; }
.dd.dim::before { border-top-color: #bbb; }
.dd.gray::before { border-left-width: 4px; border-right-width: 4px; border-top: 4px solid #777; }
.over { flex: none; width: 10px; height: 26px; align-self: flex-start; background: linear-gradient(#efefef, #c2c2c2); display: flex; flex-direction: column; align-items: center; justify-content: flex-end; padding-bottom: 4px; gap: 1px; }
.over::before { content: ""; width: 6px; height: 1px; background: #111; }
.over::after { content: ""; border-left: 4px solid transparent; border-right: 4px solid transparent; border-top: 4px solid #111; }
.m1 { margin-left: 1px; }
.m2 { margin-left: 2px; }
.m3 { margin-left: 3px; }
.m4 { margin-left: 4px; }
.m5 { margin-left: 5px; }
.sep.m1 { margin-left: 3px; }
.sep.m2 { margin-left: 4px; }
.sep.m5 { margin-left: 7px; }
.scale { flex: none; width: 148px; height: 22px; margin-left: 3px; background: #fff; border: 1px solid #7a7a7a; display: flex; align-items: center; justify-content: space-between; padding: 0 4px 0 2px; font-family: "DejaVu Sans Mono", monospace; font-size: 12px; }
.chev { width: 12px; height: 12px; flex: none; }
.edlabel { margin-left: 4px; font-size: 12px; font-family: "Noto Sans CJK SC", sans-serif; color: #111; }

.workspace { flex: 1; display: flex; min-height: 0; }
.sidebar { width: 276px; flex: none; padding-right: 5px; background: #f2f2f2; display: flex; flex-direction: column; }
.dockhead { height: 22px; flex: none; display: flex; align-items: center; padding-left: 4px; padding-right: 4px; background: linear-gradient(90deg, #c5d3e2, #d4e1ef); font-size: 12px; font-family: "Noto Sans CJK SC", sans-serif; color: #111; }
.dockhead span { flex: 1; }
.pin { width: 10px; height: 12px; margin-right: 7px; }
.close { width: 10px; height: 10px; }
.dockbar { flex: none; display: flex; align-items: center; background: #f7f7f7; }
.tocbar { height: 26px; padding-left: 4px; }
.tocbar .sep { margin: 0 3px 0 2px; }
.catbar { height: 23px; padding: 1px 0 0 3px; background: #f6f6f6; }
.moreglyph { width: 9px; height: 6px; margin-left: 10px; align-self: flex-start; margin-top: 6px; }

.toc { height: 455px; flex: none; background: #fff; border: 1px solid #a0a0a0; display: flex; flex-direction: column; width: 270px; }
.tocmain { height: 432px; flex: none; display: flex; }
.toctree { width: 246px; overflow: hidden; font-size: 15.5px; }
.row { height: 23px; display: flex; align-items: center; white-space: nowrap; }
.r0 { padding-left: 7px; }
.r1 { padding-left: 26px; }
.r2 { padding-left: 45px; }
.r3 { padding-left: 76px; }
.r4 { padding-left: 101px; }
.box { width: 11px; height: 11px; flex: none; }
.chk { width: 12px; height: 12px; margin-left: 7px; flex: none; }
.ml5 { margin-left: 5px; }
.ml6 { margin-left: 6px; }
.ml7 { margin-left: 7px; }
.strong { font-weight: 600; font-size: 15px; font-family: "Noto Sans CJK SC", sans-serif; }
.sw { flex: none; width: 15px; height: 11px; margin: 2px 6px 0 0; border: 1px solid #808080; }
.other { background: #f5c8b4; }
.s0 { background: #ffc800; } .s1 { background: #ffbe00; } .s2 { background: #ffb400; } .s3 { background: #ffaa00; }
.s4 { background: #ffa000; } .s5 { background: #ff9600; } .s6 { background: #ff8c00; } .s7 { background: #ff8000; }
.s8 { background: #ff7800; } .s9 { background: #ff6e00; } .s10 { background: #ff6414; } .s11 { background: #ff5a14; }
.s12 { background: #ff5020; } .s13 { background: #ff4428; }
.vscroll { width: 20px; flex: none; background: #f0f0f0; display: flex; flex-direction: column; }
.sbtn { height: 22px; display: flex; align-items: center; justify-content: center; flex: none; }
.vthumb { height: 123px; flex: none; background: #cdcdcd; }
.sfill { flex: 1; }
.chv { width: 12px; height: 12px; }
.hscroll { height: 19px; flex: none; display: flex; background: #f0f0f0; width: 266px; }
.hbtn { width: 22px; display: flex; align-items: center; justify-content: center; flex: none; }
.hbtnr { margin-right: 20px; }
.hthumb { width: 69px; flex: none; background: #cdcdcd; }

.dockgap { height: 6px; flex: none; }
.locrow { height: 28px; flex: none; display: flex; align-items: center; padding-left: 3px; background: #f6f6f6; }
.loclabel { width: 51px; font-size: 12px; font-family: "Noto Sans CJK SC", sans-serif; }
.loccombo { width: 214px; height: 22px; display: flex; align-items: center; padding: 0 3px; background: #fff; border: 1px solid #7a7a7a; }
.loctext { width: 172px; margin-left: 3px; overflow: hidden; white-space: nowrap; font-size: 12px; font-family: "Noto Sans CJK SC", sans-serif; }
.loctext small { font-family: "Open Sans", sans-serif; font-size: 11px; letter-spacing: -.5px; }
.loccombo .chev { margin-left: 4px; }

.catalog { flex: 1; width: 267px; min-height: 0; overflow: hidden; background: #fff; border-top: 1px solid #808080; border-right: 1px solid #a0a0a0; border-left: 1px solid #a0a0a0; font-size: 12.5px; }
.crow { height: 17px; display: flex; align-items: center; white-space: nowrap; color: #1a1a1a; }
.zh { font-family: "Noto Sans CJK SC", sans-serif; font-size: 12px; }
.cbox { width: 9px; height: 9px; margin-left: -7px; flex: none; }
.cfold { margin-left: 9px; }
.hl { margin-left: 2px; padding: 0 2px; background: #f0f0f0; }
.nohl { margin-left: 4px; font-family: "Noto Sans CJK SC", sans-serif; font-size: 12px; }
.sbox { width: 9px; height: 9px; margin-left: 14px; flex: none; }
.sfold { margin-left: 7px; width: 15px; }
.csub > span { margin-left: 5px; }

.mapview { flex: 1; min-width: 0; background: #fff; border-top: 2px solid #808080; border-left: 2px solid #a0a0a0; padding: 48px 0 0 228px; }
.grid { width: 813px; height: 757px; padding: 1px; gap: 1px; background: #6e6e6e; display: grid;
  grid-template-columns: repeat(2, 18px) 17px repeat(8, 18px) 17px repeat(9, 18px) 17px repeat(9, 18px) 17px repeat(9, 18px) 17px 18px;
  grid-template-rows: repeat(6, 18px) 17px repeat(9, 18px) 17px repeat(9, 18px) 17px repeat(8, 18px) 17px repeat(4, 18px); }
.l0 { background: #ffc800; } .l1 { background: #ffbb00; } .l2 { background: #ffac00; } .l3 { background: #ff9a00; }
.l4 { background: #ff8500; } .l5 { background: #ff7308; } .l6 { background: #ff6614; } .l7 { background: #ff581e; }
.l8 { background: #ff4628; } .l9 { background: #ff3038; } .la { background: #ff1e3c; } .lb { background: #ff0040; }
.lc { background: #ff0070; } .ld { background: #f5009b; } .le { background: #d800ab; } .lf { background: #b000bc; }
.lg { background: #8400da; } .lh { background: #6800e8; } .li { background: #3000f8; } .lj { background: #0000ff; } .lk { background: #5000f0; }

.floatbar { position: absolute; top: 11px; right: 0; width: 287px; height: 46px; border: 2px solid #8a8a8a; border-right: 0; border-radius: 2px 0 0 2px; background: #f6f6f6; padding: 1px 0 0 1px; }
.floattitle { height: 16px; background: #a0a0a0; color: #fff; font-size: 12px; line-height: 16px; padding-left: 2px; font-family: "Noto Sans CJK SC", sans-serif; }
.floattools { height: 25px; display: flex; align-items: center; padding-left: 0; }
.floattools .sep { margin: 0 2px 0 3px; }
.pct { flex: none; width: 60px; height: 22px; margin-left: 0; border: 1px solid #d8d8d8; background: #fff; display: flex; align-items: center; justify-content: space-between; padding: 0 4px 0 2px; font-size: 13px; color: #666; }
.pct span { width: 34px; background: #efefef; padding-left: 1px; }
.faded { border-color: #a9c6e2; }
.watermark { position: absolute; right: 9px; top: 891px; font-family: "Liberation Sans", sans-serif; font-size: 16px; color: #e9e9e9; white-space: nowrap; }
.svgxy { font: 700 9.5px "Liberation Sans", sans-serif; fill: #1e5a96; }
.svga { font: 700 9px "Liberation Sans", sans-serif; fill: #bbb; }
.svg11 { font: 700 8px "Liberation Sans", sans-serif; fill: #8e8e8e; }
```
FILE: script.js
```js
var rows = [
"",
"31:1 33:3",
"25:1 32:1 33:2",
"23:1 24:1 25:4 26:1 29:1 30:1 32:3",
"15:1 18:1 19:1 20:1 21:2 22:2 23:2 24:6 25:c 26:7 27:7 28:7 29:9 30:a 31:5 32:6",
"14:2 16:3 17:2 18:2 19:1 20:1 21:1 23:4 24:4 25:1 26:6 28:1 31:1",
"13:2 14:1 16:3 17:1 18:1 21:1 22:3 23:4 24:1 26:3 28:1 31:1 32:1 33:1",
"1:1 2:1 3:f 4:c 12:2 14:1 15:1 17:6 18:2 20:1 21:4 22:7 23:2 26:2 27:1 28:1 30:1 31:1 32:1 33:1 36:2",
"2:1 4:g 5:d 6:1 7:1 11:1 12:1 14:2 16:1 17:1 18:6 20:2 21:6 23:1 27:3 29:1 30:1 33:1",
"0:1 3:1 5:h 6:b 10:2 12:1 14:1 15:2 16:1 18:2 19:9 20:7 23:1 25:1 26:2 27:2 28:1 29:1 30:1 33:1 34:1 35:1",
"0:1 1:1 2:2 4:2 5:i 6:j 7:e 9:1 10:1 11:3 13:1 14:1 16:1 17:2 18:4 19:6 21:2 22:2 23:1 24:1 26:1 27:1 28:4 32:1 33:2 37:1",
"1:2 2:2 3:c 4:j 5:d 7:e 8:e 13:1 14:1 16:1 17:a 18:7 20:6 22:1 24:2 27:1 28:2 31:1 35:4 36:c 37:b 38:2",
"1:2 2:f 3:k 4:3 5:1 8:6 9:7 10:5 11:8 12:6 13:1 14:2 15:7 16:8 20:1 21:2 24:2 25:4 26:5 27:2 28:8 29:9 30:b 31:c 32:4 33:3 34:c 35:c 36:6 38:b",
"1:g 2:f 4:1 5:1 7:2 8:1 11:1 12:7 13:a 14:7 16:1 21:8 22:2 23:3 24:4 25:3 28:8 29:c 30:5 31:5 32:b 33:c 34:5 36:1 37:2 38:4",
"1:e 4:1 7:1 9:1 10:1 11:2 14:1 15:1 22:3 23:6 24:c 25:a 26:b 27:9 28:4 29:6 33:1 35:1 37:2",
"4:1 7:1 9:1 10:2 12:1 14:1 15:1 17:3 18:2 19:4 21:a 22:c 23:3 24:1 27:1 28:1 29:6 33:2 34:1 36:1 37:3 38:1",
"9:1 10:2 11:2 12:1 13:1 14:2 16:1 17:1 19:1 20:c 21:2 22:5 23:2 27:1 28:6 33:1 36:1 37:2 38:1",
"8:2 9:1 10:1 12:2 13:1 14:2 15:2 16:1 17:2 19:3 21:4 22:2 26:1 27:1 28:5 34:1 35:1 37:1 38:1",
"6:2 7:1 8:1 9:2 11:2 14:1 15:2 17:1 18:1 19:1 21:3 22:1 24:1 26:1 27:3 36:1 38:1",
"5:1 6:1 7:2 8:1 11:2 12:2 13:1 17:2 18:1 19:1 20:5 24:3 26:1 27:5 34:1 35:1",
"6:2 7:1 11:1 12:2 13:1 15:1 16:1 19:6 20:3 25:1 26:4 29:1 30:1 31:1 32:2 33:2 35:1",
"4:1 7:1 8:1 11:1 12:2 17:1 18:2 19:8 20:2 24:1 25:1 26:2 27:1 28:1 29:1",
"4:1 5:1 6:2 7:2 10:1 11:1 12:1 13:1 14:2 16:1 18:8 19:2 20:6 22:2 25:3 27:1 32:1 33:1 35:1",
"3:1 4:1 5:1 6:2 11:b 13:1 14:a 15:3 16:2 17:7 18:1 21:6 22:3 25:2 26:1 31:1 32:1 33:1 34:2",
"3:1 6:1 7:1 10:8 11:b 15:b 16:b 17:2 19:1 22:4 23:4 24:8 26:1 29:1 30:2 35:1 36:1 39:2 40:7",
"3:1 4:4 5:4 6:1 7:1 8:1 9:9 10:1 11:c 13:4 14:4 16:4 17:3 19:1 20:2 21:7 22:6 23:8 24:c 25:2 26:3 28:2 29:2 31:1 33:1 37:1 38:8 39:6 40:1",
"6:2 7:4 8:7 9:b 10:2 11:b 12:7 13:4 14:4 16:1 17:7 18:2 19:a 20:3 21:3 23:4 24:8 25:6 26:4 27:7 28:7 31:2 32:8 33:7 34:7 35:6 36:6 37:9 38:1 39:1 40:1",
"7:3 8:3 10:1 11:2 12:7 14:5 17:c 18:6 20:2 23:6 25:5 29:7 30:7 31:a 32:1 38:1",
"6:6 7:a 8:1 9:1 10:1 11:b 14:1 15:2 18:a 20:2 23:4 24:1 25:1 26:5 28:2 29:1 31:1 38:1",
"4:1 5:b 6:6 7:1 11:b 15:3 16:1 17:2 18:c 20:1 23:7 26:1 27:5 28:1 29:1 31:1 32:1 33:1 36:2 37:2 38:1 39:1",
"4:9 5:3 7:1 10:1 11:b 15:3 18:c 21:2 22:3 23:2 28:3 30:1 33:2 35:1 36:1 38:1 39:1",
"4:4 5:5 9:1 11:c 12:3 15:3 16:3 18:4 19:7 22:6 24:2 27:1 29:3 30:2 33:2 35:1 36:1 39:2",
"4:3 5:2 6:6 7:5 9:1 12:c 13:1 16:4 17:1 18:1 19:c 22:4 24:1 27:1 30:3 31:3 32:1 35:1",
"5:5 6:2 7:1 8:3 13:c 15:1 16:3 17:2 18:1 19:b 20:1 21:8 22:2 24:1 30:1 31:2 32:5 33:4 34:1 35:2",
"5:3 8:1 9:7 10:1 13:b 14:3 15:1 16:1 17:7 19:c 20:4 21:1 22:1 25:3 26:1 31:2 32:1 33:1 34:5",
"5:1 8:1 9:2 10:7 11:4 14:c 16:1 17:2 18:4 19:2 20:c 27:3 28:1",
"5:1 7:1 8:1 11:1 12:7 13:5 14:c 15:6 16:3 17:5 18:4 20:c",
"8:1 10:1 11:3 14:c 16:1 17:1 19:2 20:3",
"6:1 8:1 9:1 10:1 14:3",
"6:1 7:1 8:1 9:1"
];
var grid = document.getElementById("grid");
var frag = document.createDocumentFragment();
rows.forEach(function (row) {
  var levels = {};
  row.split(" ").forEach(function (pair) {
    if (pair) { var p = pair.split(":"); levels[p[0]] = p[1]; }
  });
  for (var c = 0; c < 43; c++) {
    var cell = document.createElement("div");
    cell.className = "l" + (levels[c] || "0");
    frag.appendChild(cell);
  }
});
grid.appendChild(frag);
```
